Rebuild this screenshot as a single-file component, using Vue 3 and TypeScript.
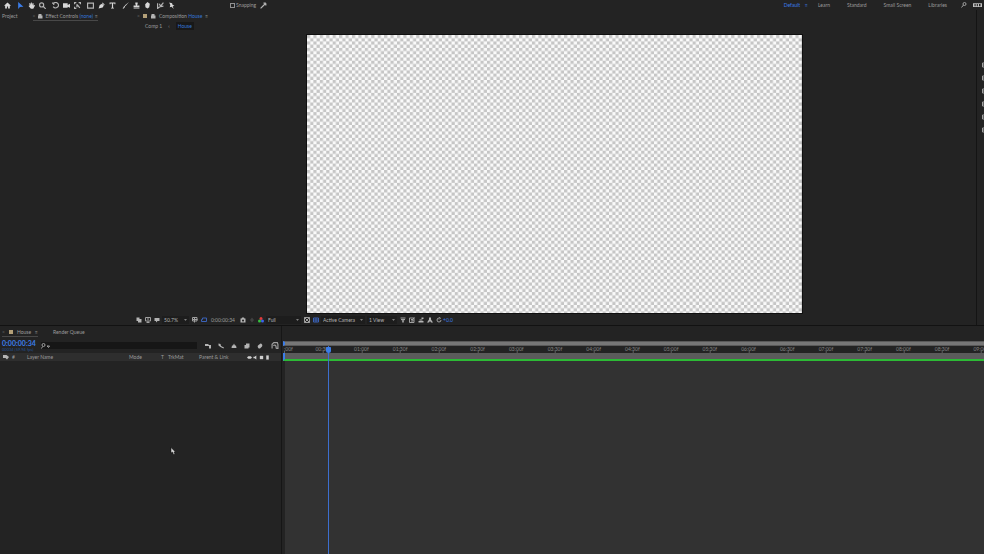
<script setup lang="ts">
import { ref } from 'vue'

interface Tool {
  label: string
  d: string
  line?: boolean
  cls?: string
}

const home: Tool = { label: 'Home', d: 'M6 1 0 6.5h2V11h3V7.5h2V11h3V6.5h2z' }

const toolGroups: Tool[][] = [
  [home],
  [
    { label: 'Selection', d: 'M2 0v12l3-3.5 6-.5z', cls: 'blue' },
    { label: 'Hand', d: 'M2 2h2l.5 3L5 1h1.500l.5 4 1-3.500 1.500.5L9.500 6 11 5l1 1-3 5.500H5L1 7l1-1 1 .5z' },
    { label: 'Zoom', d: 'M8 5a3.500 3.500 0 1 1-7 0a3.500 3.500 0 0 1 7 0M7.500 7.500 11.500 12', line: true },
  ],
  [
    { label: 'Orbit', d: 'M3 2a5 4.500 0 1 1-1 6M3 2v3M3 2H0', line: true },
    { label: 'Camera', d: 'M0 2h8v3l4-2v7L8 8v2H0z' },
    { label: 'Pan Behind', d: 'M1 4V1h3M8 1h3v3M1 8v3h3M5 4l5 6M5 4v5', line: true },
  ],
  [
    { label: 'Rectangle', d: 'M1 2h10v8.500H1z', line: true },
    { label: 'Pen', d: 'M1 11 3 5l4-2 3 3-2 3.500zM8 1l3.500 3.500-1 1L7 2z' },
    { label: 'Type', d: 'M1 1h10v3H9.500V2.500H7V10h1.500v1h-5v-1H5V2.500H2.500V4H1z' },
  ],
  [
    { label: 'Brush', d: 'M12 0 6 7 4.500 6zM4 6.500 5.500 8 3 11l-2 .5z' },
    { label: 'Clone Stamp', d: 'M4 1h4v2L7 6h4v3H1V6h4L4 3zM1 10h10v1H1z' },
    { label: 'Eraser', d: 'M6 0 10 3 9 9 6 11 2.500 9 2 4z' },
  ],
  [
    { label: 'Roto Brush', d: 'M1 2v9l4-3M4 3l2 4 5-6M6 8l5-1', line: true },
    { label: 'Puppet Pin', d: 'M2 1l5 1 1 3 3 1-3 1.500L10 12 6 8l-3 1 1-4z' },
  ],
]

const workspaces = ['Learn', 'Standard', 'Small Screen', 'Libraries']
const snapping = ref(false)
const search = ref('')

const viewLeft: Tool[] = [
  { label: 'Always Preview', d: 'M1 1h6v3h4v7H4V8H1z' },
  { label: 'Primary Viewer', d: 'M1 1h10v7H1zM3 11h6M6 8v3M4 4h4', line: true },
  { label: 'Fast Previews', d: 'M1 2h10v6H7l-3 3V8H1z' },
]
const viewRight: Tool[] = [
  { label: 'Pixel Aspect', d: 'M1 2h10M2 5h8M4 5l2 6 2-6', line: true },
  { label: 'Fast Draft', d: 'M1 2h9v9H1zM4 5h4v3H4M8 4l3-3', line: true },
  { label: 'Timeline', d: 'M1 8h10v3H1zM3 5h6v2H3zM7 1h4v3H7z' },
  { label: 'Flowchart', d: 'M4 1h4v4l4 6H8L6 8l-2 3H0l4-6z' },
  { label: 'Reset Exposure', d: 'M6 2a4 4 0 1 0 4 4M6 0l3 2-3 3', line: true },
]
const timelineTools: Tool[] = [
  { label: 'Composition Mini-Flowchart', d: 'M0 2h7v2h5v7H8V6H0z' },
  { label: 'Draft 3D', d: 'M1 1l4 1 1 4 6 3-1 2-6-3-4-3z' },
  { label: 'Shy Layers', d: 'M6 1l2 4h2l1 5H1l1-5h2z' },
  { label: 'Frame Blending', d: 'M4 1h7v8H9v2H1V4h3z' },
  { label: 'Motion Blur', d: 'M7 1a4 4 0 0 1 3 6l-4 4a4 4 0 0 1-4-6z' },
]
const switches: Tool[] = [
  { label: 'Video', d: 'M0 6 3 3h6l3 3-3 3H3z' },
  { label: 'Audio', d: 'M1 4h3l4-3v10L4 8H1z' },
  { label: 'Solo', d: 'M2 2h8v8H2z' },
  { label: 'Lock', d: 'M3 1h6v10H3z' },
]
const sidePanels = ['Info', 'Audio', 'Preview', 'Effects', 'Align', 'Character']

// 60 frames per second, one label every 30 frames
const marks = Array.from({ length: 19 }, (_, i) => {
  const sec = String(Math.floor(i / 2)).padStart(2, '0')
  return { text: i === 0 ? ':00f' : `${sec}:${i % 2 ? '30' : '00'}f`, left: i * 5.53 }
})
</script>

<template>
  <div class="app">
    <header class="toolbar">
      <nav class="tools" aria-label="Tools">
        <div v-for="(group, g) in toolGroups" :key="g" class="group">
          <button v-for="t in group" :key="t.label" type="button" class="tool" :class="t.cls" :aria-label="t.label">
            <svg viewBox="0 0 12 12" :class="{ line: t.line }"><path :d="t.d" /></svg>
          </button>
        </div>
      </nav>
      <label class="snap"><input v-model="snapping" type="checkbox" /><span>Snapping</span></label>
      <button type="button" class="tool" aria-label="Snap edges">
        <svg viewBox="0 0 12 12" class="line"><path d="M1 11 6 6M6 2l4 0M10 2v4M10 2 6 6" /></svg>
      </button>
      <nav class="workspaces" aria-label="Workspaces">
        <button type="button" class="text blue">Default</button>
        <button type="button" class="text blue menu">≡</button>
        <button v-for="w in workspaces" :key="w" type="button" class="text ws">{{ w }}</button>
        <button type="button" aria-label="Search help">
          <svg viewBox="0 0 12 12" class="line"><path d="M10 4a3 3 0 1 1-6 0a3 3 0 0 1 6 0M5 6l-4 5" /></svg>
        </button>
        <button type="button" class="wide" aria-label="Workspace bar">
          <svg viewBox="0 0 24 12"><path d="M0 1h24v10H0zM4 3v6h3V3zM10 3v6h3V3zM16 3v6h4V3z" fill-rule="evenodd" /></svg>
        </button>
      </nav>
    </header>

    <main class="upper">
      <section class="project">
        <button type="button" class="text">Project</button>
        <div class="tab effects">
          <span class="dim">×</span>
          <svg viewBox="0 0 12 12"><path d="M2 5h1V2h6v3h2v6H2z" /></svg>
          <span>Effect Controls <b>(none)</b></span>
          <span>≡</span>
        </div>
      </section>

      <section class="composition">
        <div class="comp-tabs">
          <span class="dim">×</span>
          <i class="comp-icon"></i>
          <svg viewBox="0 0 12 12"><path d="M2 5h1V2h6v3h2v6H2z" /></svg>
          <span>Composition <b>House</b></span>
          <span>≡</span>
        </div>
        <nav class="crumbs" aria-label="Composition navigator">
          <a href="#comp">Comp 1</a><span>‹</span><a href="#house" class="current">House</a>
        </nav>
        <div class="viewer">
          <svg class="canvas" viewBox="0 0 1540 865" preserveAspectRatio="xMidYMid slice" role="img" aria-label="Transparency grid">
            <defs>
              <pattern id="grid" width="20" height="20" patternUnits="userSpaceOnUse">
                <rect width="20" height="20" fill="#fafafa" />
                <path d="M0 0h10v10H0zM10 10h10v10H10z" fill="#c6c6c6" />
              </pattern>
            </defs>
            <rect width="1540" height="865" fill="url(#grid)" />
          </svg>
        </div>
        <div class="view-bar">
          <button v-for="t in viewLeft" :key="t.label" type="button" class="mini" :aria-label="t.label">
            <svg viewBox="0 0 12 12" :class="{ line: t.line }"><path :d="t.d" /></svg>
          </button>
          <label class="pick zoom"><select aria-label="Magnification"><option>50.7%</option></select></label>
          <button type="button" class="mini" aria-label="Grid options">
            <svg viewBox="0 0 12 12" class="line"><path d="M1 1h9v7H1zM5 1v10M1 5h10" /></svg>
          </button>
          <button type="button" class="mini blue" aria-label="Mask visibility">
            <svg viewBox="0 0 12 12" class="line"><path d="M3 2h8v7H1V5h2z" /></svg>
          </button>
          <button type="button" class="text time">0:00:00:34</button>
          <button type="button" class="mini" aria-label="Snapshot">
            <svg viewBox="0 0 12 12"><path d="M1 3h2l1-2h4l1 2h2v8H1zM6 5a2 2 0 1 0 .1 0z" fill-rule="evenodd" /></svg>
          </button>
          <button type="button" class="mini faint" aria-label="Show snapshot">
            <svg viewBox="0 0 12 12"><path d="M6 1l4 5-4 5-4-5z" /></svg>
          </button>
          <button type="button" class="mini" aria-label="Channels">
            <svg viewBox="0 0 12 12"><circle cx="6" cy="3" r="3" fill="#e33b3b" /><circle cx="3" cy="8" r="3" fill="#36c23e" /><circle cx="9" cy="8" r="3" fill="#3b62ee" /></svg>
          </button>
          <label class="pick res"><select aria-label="Resolution"><option>Full</option></select></label>
          <button type="button" class="mini" aria-label="Region of interest">
            <svg viewBox="0 0 12 12" class="line"><path d="M1 1h10v10H1zM1 1l10 10M11 1 1 11" /></svg>
          </button>
          <button type="button" class="mini blue" aria-label="Transparency grid">
            <svg viewBox="0 0 12 12" class="line"><path d="M1 2h10v8H1zM1 6h10M6 2v8" /></svg>
          </button>
          <label class="pick camera"><select aria-label="3D view"><option>Active Camera</option></select></label>
          <label class="pick views"><select aria-label="View layout"><option>1 View</option></select></label>
          <button v-for="t in viewRight" :key="t.label" type="button" class="mini" :aria-label="t.label">
            <svg viewBox="0 0 12 12" :class="{ line: t.line }"><path :d="t.d" /></svg>
          </button>
          <button type="button" class="text blue">+0.0</button>
        </div>
      </section>

      <aside class="side">
        <button v-for="p in sidePanels" :key="p" type="button" class="mini" :aria-label="p">
          <svg viewBox="0 0 12 12" class="line"><path d="M3 2h8v8H3zM3 6h4" /></svg>
        </button>
      </aside>
    </main>

    <section class="lower">
      <div class="layers">
        <div class="tl-tabs">
          <div class="tab house"><span class="dim">×</span><i class="comp-icon"></i><span>House</span><span>≡</span></div>
          <button type="button" class="text">Render Queue</button>
        </div>
        <div class="tl-head">
          <div class="clock"><strong>0:00:00:34</strong><small>00034 (59.94 fps)</small></div>
          <label class="search">
            <svg viewBox="0 0 20 12" class="line"><path d="M8 4a3 3 0 1 1-6 0a3 3 0 0 1 6 0M3 7l-2 4M12 6h5l-2 3z" /></svg>
            <input v-model="search" type="text" aria-label="Search layers" />
          </label>
          <div class="tl-tools">
            <button v-for="t in timelineTools" :key="t.label" type="button" class="mini" :aria-label="t.label">
              <svg viewBox="0 0 12 12"><path :d="t.d" /></svg>
            </button>
            <button type="button" class="mini graph" aria-label="Graph editor">
              <svg viewBox="0 0 12 12" class="line"><path d="M1 11V4l3-3h6l1 3v7H8M3 6c4-2 5 0 5 5" /></svg>
            </button>
          </div>
        </div>
        <div class="columns">
          <svg viewBox="0 0 12 12"><path d="M0 2h7l5 4-4 5-3-3H0z" /></svg>
          <span>#</span><span>Layer Name</span><span>Mode</span><span>T</span><span>TrkMat</span><span>Parent &amp; Link</span>
          <div class="switches">
            <button v-for="t in switches" :key="t.label" type="button" class="sw" :aria-label="t.label">
              <svg viewBox="0 0 12 12"><path :d="t.d" /></svg>
            </button>
          </div>
        </div>
        <div class="layer-list">
          <svg class="pointer" viewBox="0 0 12 16"><path d="M2 1v11l3-2 2 5 3-1-2-4h3z" /></svg>
        </div>
      </div>

      <div class="timeline">
        <div class="navigator"></div>
        <div class="ruler">
          <span v-for="m in marks" :key="m.text" class="mark" :style="{ left: m.left + '%' }">{{ m.text }}</span>
        </div>
        <div class="work-area"></div>
        <div class="tracks"></div>
        <div class="playhead"><i></i></div>
      </div>
    </section>
  </div>
</template>

<style>
body {
  margin: 0;
  background: #232323;
}
</style>

<style scoped>
.app {
  display: grid;
  grid-template-rows: 10px minmax(0, 316fr) minmax(0, 228fr);
  height: 100vh;
  overflow: hidden;
  background: #232323;
  color: #9c9c9c;
  font: 5px/8px Lato, "Liberation Sans", sans-serif;
}
* {
  box-sizing: border-box;
}
button,
input,
select {
  margin: 0;
  padding: 0;
  border: 0;
  background: none;
  color: inherit;
  font: inherit;
}
svg {
  display: block;
  flex: none;
  width: 6px;
  height: 6px;
  fill: #b4b4b4;
}
svg.line {
  fill: none;
  stroke: #a0a0a0;
  stroke-width: 2;
}
b {
  color: #3476d8;
  font-weight: 400;
}
.dim {
  color: #606060;
}
.blue {
  color: #3b7de8;
}
.blue svg {
  fill: #3b7de8;
}
.blue svg.line {
  fill: none;
  stroke: #3b62b8;
}
.faint {
  opacity: 0.2;
}
.text {
  white-space: nowrap;
}

.toolbar {
  display: flex;
  align-items: center;
  padding: 0 2px;
}
.tools {
  display: flex;
  gap: 2px;
  width: 228px;
}
.group {
  display: flex;
}
.tool {
  display: grid;
  place-items: center;
  width: 11px;
  height: 9px;
}
.tool svg {
  width: 7px;
  height: 7px;
  fill: #d8d8d8;
}
.tool svg.line {
  fill: none;
  stroke: #b4b4b4;
}
.tool.blue svg {
  fill: #3b7de8;
}
.snap {
  display: flex;
  align-items: center;
  gap: 1px;
  width: 28px;
}
.snap input {
  appearance: none;
  width: 5px;
  height: 5px;
  border: 1px solid #909090;
}
.workspaces {
  display: flex;
  flex: 1;
  align-items: center;
  justify-content: flex-end;
}
.menu {
  margin: 0 10px 0 5px;
}
.ws {
  margin-right: 17px;
}
.ws:nth-last-child(3) {
  margin-right: 14px;
}
.wide {
  margin-left: 6px;
}
.wide svg {
  width: 9px;
  height: 6px;
  fill: #c0c0c0;
}

.upper {
  display: grid;
  grid-template-columns: 133px minmax(0, 1fr) 8px;
  grid-template-rows: minmax(0, 1fr);
  min-height: 0;
  border-bottom: 1px solid #121212;
}
.project {
  display: flex;
  align-items: flex-start;
  gap: 15px;
  padding: 2px 2px;
}
.tab {
  display: flex;
  align-items: center;
  gap: 2px;
  height: 9px;
  border-bottom: 1px solid #484848;
  white-space: nowrap;
}
.composition {
  display: flex;
  flex-direction: column;
  min-width: 0;
  min-height: 0;
}
.comp-tabs {
  display: flex;
  align-items: center;
  gap: 3px;
  height: 12px;
  padding-left: 4px;
}
.comp-icon {
  width: 4px;
  height: 4px;
  background: #b3a078;
}
.crumbs {
  display: flex;
  gap: 6px;
  height: 13px;
  padding-left: 12px;
}
.crumbs a {
  color: inherit;
  text-decoration: none;
}
.crumbs .current {
  padding: 0 2px;
  height: 8px;
  background: #181818;
  color: #3476d8;
}
.viewer {
  display: flex;
  flex: 1;
  justify-content: center;
  min-height: 0;
}
.canvas {
  width: 58.7%;
  height: 100%;
  outline: 1px solid #101010;
}
.view-bar {
  display: flex;
  flex: none;
  align-items: center;
  height: 12px;
  padding: 2px 0 0 1px;
}
.mini {
  display: grid;
  place-items: center;
  width: 9px;
  height: 8px;
}
.pick {
  position: relative;
  height: 8px;
  margin: 0 1px;
  background: #1d1d1d;
}
.pick::after {
  content: "";
  position: absolute;
  right: 2px;
  top: 3px;
  width: 3px;
  height: 2px;
  background: #7c7c7c;
  clip-path: polygon(0 0, 100% 0, 50% 100%);
  pointer-events: none;
}
.pick select {
  display: block;
  appearance: none;
  width: 100%;
  height: 8px;
  padding-left: 2px;
  color: #b4b4b4;
}
.zoom {
  width: 27px;
}
.time {
  width: 30px;
}
.res {
  width: 35px;
}
.camera {
  width: 44px;
}
.views {
  width: 30px;
}
.side {
  display: flex;
  flex-direction: column;
  gap: 5px;
  padding: 51px 0 0 1px;
  border-left: 1px solid #141414;
  overflow: hidden;
}
.side .mini {
  margin-left: 1px;
}

.lower {
  display: grid;
  grid-template-columns: 282px minmax(0, 1fr);
}
.layers {
  display: flex;
  flex-direction: column;
  border-right: 1px solid #161616;
}
.tl-tabs {
  display: flex;
  align-items: flex-start;
  gap: 15px;
  height: 12px;
  padding: 2px 2px 0;
}
.house {
  width: 36px;
  gap: 4px;
}
.tl-head {
  display: flex;
  align-items: center;
  height: 15px;
  padding: 0 2px;
}
.clock {
  width: 39px;
  color: #3b7de8;
}
.clock strong,
.clock small {
  display: block;
  font-size: 7px;
  line-height: 7px;
  white-space: nowrap;
}
.clock small {
  color: #24508f;
  font-size: 4px;
  line-height: 5px;
}
.search {
  display: flex;
  align-items: center;
  width: 156px;
  height: 7px;
  background: #161616;
}
.search svg {
  width: 10px;
  height: 6px;
}
.search input {
  flex: 1;
  min-width: 0;
  height: 7px;
}
.tl-tools {
  display: flex;
  flex: 1;
  justify-content: flex-end;
  gap: 4px;
}
.tl-tools .graph {
  margin-left: 2px;
}
.tl-tools .graph svg {
  width: 8px;
  height: 7px;
}
.columns {
  display: grid;
  grid-template-columns: 9px 15px 102px 32px 7px 31px 48px 1fr;
  align-items: center;
  height: 8px;
  padding-left: 3px;
  background: #2e2e2e;
  white-space: nowrap;
}
.switches {
  display: flex;
  gap: 1px;
}
.sw svg {
  width: 5px;
  height: 5px;
  fill: #d0d0d0;
}
.layer-list {
  position: relative;
  flex: 1;
}
.pointer {
  position: absolute;
  left: 170px;
  top: 86px;
  width: 6px;
  height: 8px;
  fill: #d8d8d8;
  stroke: #080808;
}

.timeline {
  position: relative;
  display: flex;
  flex-direction: column;
  padding: 15px 0 0 1px;
  overflow: hidden;
}
.navigator {
  height: 5px;
  border: solid #5a5a5a;
  border-width: 1px 0;
  border-left: 2px solid #3b7de8;
  background: #777;
}
.ruler {
  position: relative;
  height: 7px;
  margin-left: 1px;
}
.mark {
  position: absolute;
  top: 0;
  color: #858585;
  line-height: 6px;
  transform: translateX(-50%);
}
.mark::after {
  content: "";
  position: absolute;
  left: 50%;
  top: 5px;
  width: 1px;
  height: 2px;
  background: #606060;
}
.mark:first-child {
  transform: none;
}
.mark:first-child::after {
  left: 0;
}
.work-area {
  height: 8px;
  border-left: 2px solid #3b7de8;
  border-bottom: 2px solid #2cba35;
  background: #5b5b5b;
}
.tracks {
  flex: 1;
  margin-left: 2px;
  background: #323232;
}
.playhead {
  position: absolute;
  left: 46px;
  top: 20px;
  bottom: 0;
  border-left: 1px solid #3d6fce;
}
.playhead i {
  position: absolute;
  left: -3px;
  top: 1px;
  width: 5px;
  height: 6px;
  border-radius: 1px 1px 3px 3px;
  background: #3b7de8;
}
</style>
